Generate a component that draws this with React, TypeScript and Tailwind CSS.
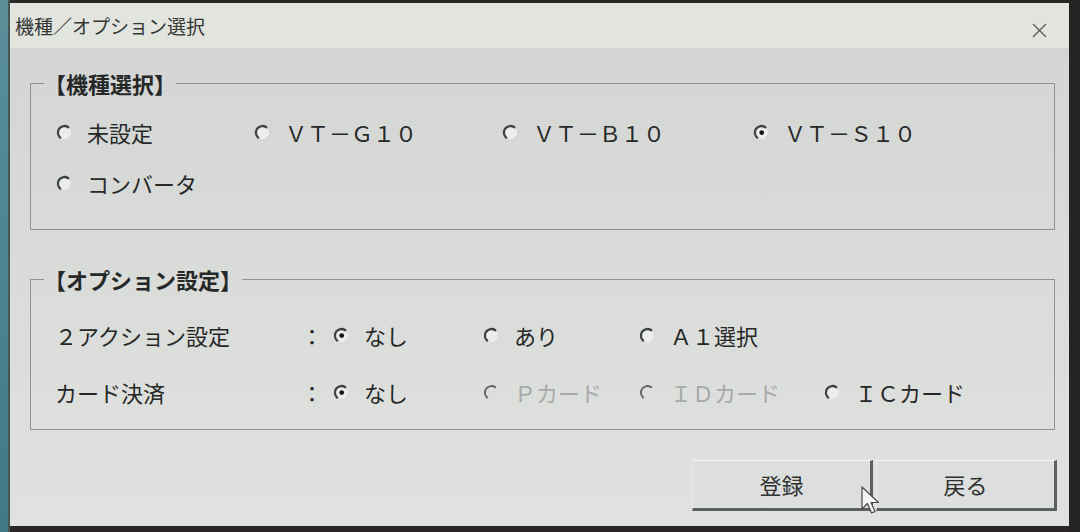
import React from 'react';

const FONT = { fontFamily: '"Noto Sans CJK JP", "Noto Sans", sans-serif' };

// classic windows radio button, drawn
const RadioMark: React.FC<{ checked?: boolean; disabled?: boolean }> = ({ checked = false, disabled = false }) => (
  <svg width="17" height="17" viewBox="0 0 17 17" className="shrink-0">
    {!disabled && <circle cx="8.5" cy="8.5" r="6.4" fill="#eceeed" />}
    <path
      d="M12.3 3.2 A6.6 6.6 0 0 0 4.2 13.6"
      fill="none"
      stroke={disabled ? '#5d6161' : '#3f4242'}
      strokeWidth={disabled ? 1.8 : 2.3}
      strokeLinecap="round"
    />
    {checked && <circle cx="8.7" cy="8.6" r="2.4" fill="#151515" />}
  </svg>
);

interface RadioProps {
  label: string;
  checked?: boolean;
  disabled?: boolean;
}

const Radio: React.FC<RadioProps> = ({ label, checked, disabled }) => (
  <div className="flex items-center h-[30px] gap-[14px]">
    <RadioMark checked={checked} disabled={disabled} />
    <span className={`text-[22px] leading-none whitespace-nowrap ${disabled ? 'text-[#a7aaa9]' : 'text-[#262828]'}`}>
      {label}
    </span>
  </div>
);

const Legend: React.FC<{ children: React.ReactNode }> = ({ children }) => (
  <legend className="ml-[13px] px-0 text-[22px] leading-[24px] font-bold text-[#262828]">{children}</legend>
);

const Button: React.FC<{ label: string }> = ({ label }) => (
  <button className="w-[181px] h-[51px] flex items-center justify-center bg-[#dcdfdd] border-t border-l border-t-[#f3f4f2] border-l-[#e9ebe9] border-b-[3px] border-r-[3px] border-b-[#5b5f60] border-r-[#5b5f60] text-[22px] text-[#2f3131]">
    {label}
  </button>
);

const Cursor: React.FC = () => (
  <svg width="22" height="30" viewBox="0 0 22 30" className="absolute left-[861px] top-[486px]">
    <path d="M1 1 L1 23 L6.5 17.5 L10.5 27 L14 25.5 L10 16.5 L17.5 16.5 Z" fill="#f4f4f4" stroke="#4a4a4a" strokeWidth="1.2" strokeLinejoin="round" />
  </svg>
);

export default function App() {
  return (
    <div className="relative w-[1080px] h-[532px] overflow-hidden flex bg-[#2a2626]" style={FONT}>
      <div className="w-[10px] h-full bg-linear-to-b from-[#5a8f9a] to-[#3f7a86] border-r-2 border-r-[#4a5556]" />

      <div className="mt-[3px] w-[1059px] h-[523px] flex flex-col">
        {/* title bar */}
        <div className="h-[45px] flex items-center justify-between pl-[5px] pr-[22px] bg-[#e2e4de]">
          <span className="text-[19px] text-[#333535] leading-none">機種／オプション選択</span>
          <svg width="15" height="15" viewBox="0 0 15 15" className="mt-[9px]">
            <path d="M1 1 L14 14 M14 1 L1 14" stroke="#5a5d5d" strokeWidth="1.4" />
          </svg>
        </div>

        {/* body */}
        <div className="flex-1 flex flex-col bg-linear-to-b from-[#d3d6d4] to-[#e0e2df] pl-[20px] pr-[14px]">
          <fieldset className="mt-[23px] border border-[#8e9392] pb-[31px]">
            <Legend>【機種選択】</Legend>
            <div className="pt-[22px] pl-[25px] grid grid-cols-[198px_248px_251px_1fr] gap-y-[21px]">
              <Radio label="未設定" />
              <Radio label="ＶＴ－Ｇ１０" />
              <Radio label="ＶＴ－Ｂ１０" />
              <Radio label="ＶＴ－Ｓ１０" checked />
              <Radio label="コンバータ" />
            </div>
          </fieldset>

          <fieldset className="mt-[37px] border border-[#8e9392] pb-[22px]">
            <Legend>【オプション設定】</Legend>
            <div className="pt-[29px] pl-[24px] flex flex-col gap-[27px]">
              <div className="flex items-center">
                <span className="w-[246px] text-[22px] leading-none text-[#262828]">２アクション設定</span>
                <span className="w-[32px] text-[22px] leading-none text-[#262828]">：</span>
                <div className="w-[150px]"><Radio label="なし" checked /></div>
                <div className="w-[156px]"><Radio label="あり" /></div>
                <div className="w-[185px]"><Radio label="Ａ１選択" /></div>
              </div>
              <div className="flex items-center">
                <span className="w-[246px] text-[22px] leading-none text-[#262828]">カード決済</span>
                <span className="w-[32px] text-[22px] leading-none text-[#262828]">：</span>
                <div className="w-[150px]"><Radio label="なし" checked /></div>
                <div className="w-[156px]"><Radio label="Ｐカード" disabled /></div>
                <div className="w-[185px]"><Radio label="ＩＤカード" disabled /></div>
                <Radio label="ＩＣカード" />
              </div>
            </div>
          </fieldset>

          <div className="mt-[30px] -mr-[2px] flex justify-end gap-[3px]">
            <Button label="登録" />
            <Button label="戻る" />
          </div>
        </div>
      </div>

      <div className="flex-1 h-full bg-[#262323]" />
      <Cursor />
    </div>
  );
}
